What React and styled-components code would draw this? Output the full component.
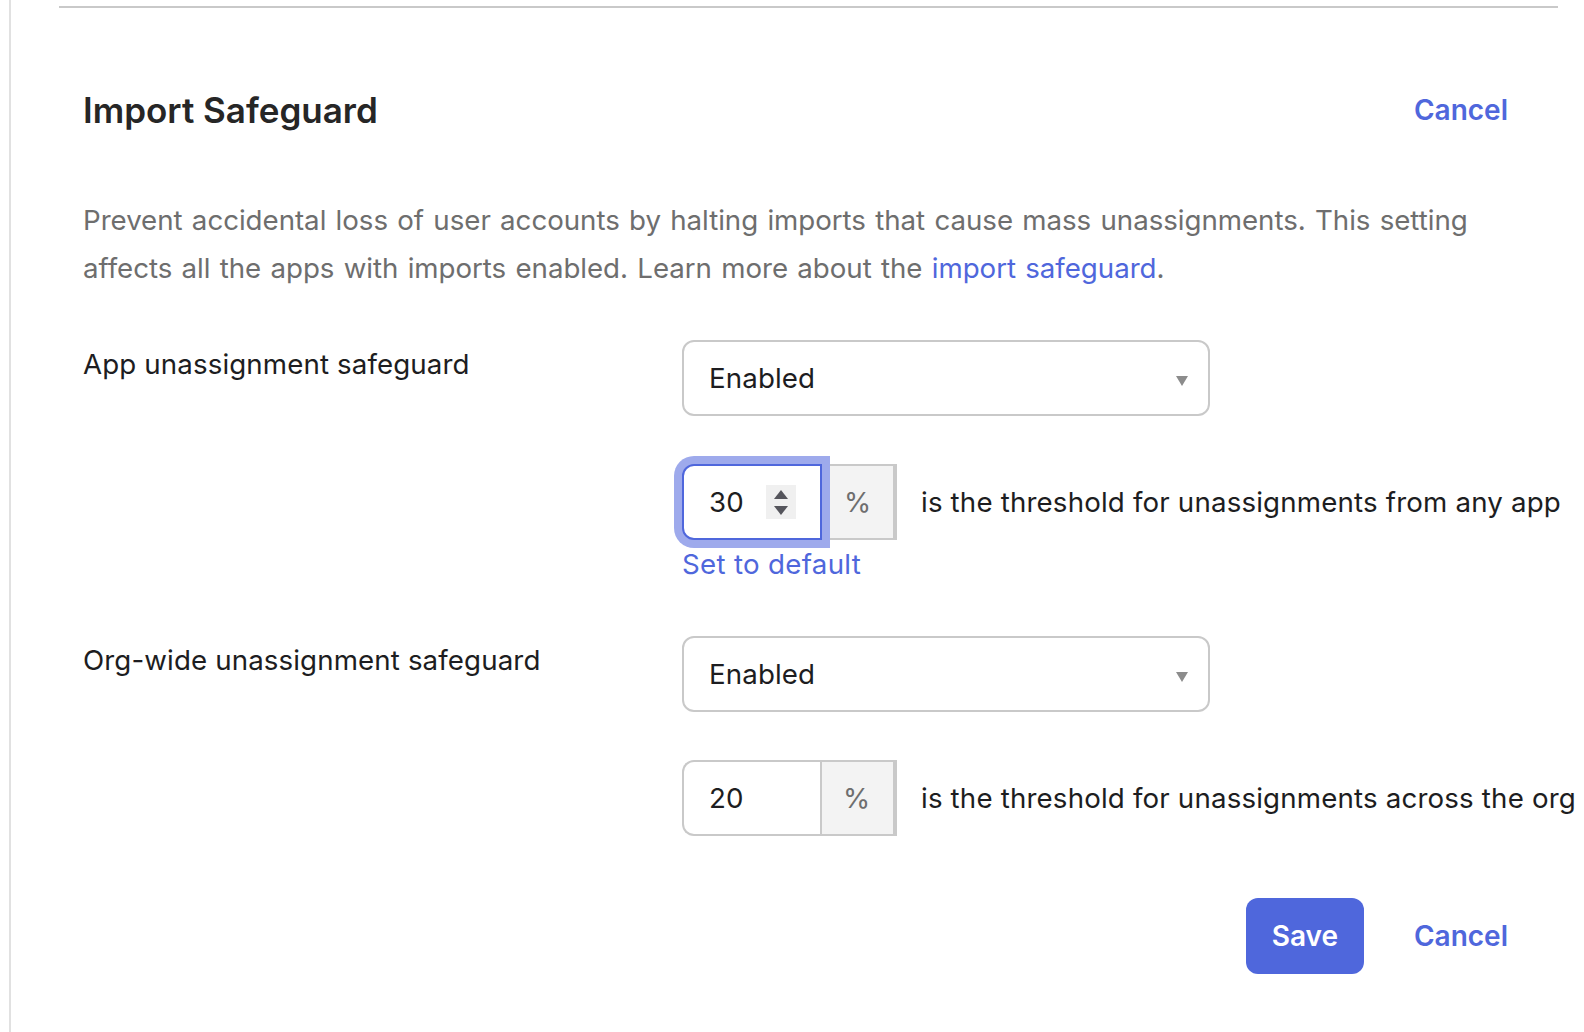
import React from "react";
import styled, { createGlobalStyle } from "styled-components";

const Global = createGlobalStyle`
  html, body { margin: 0; padding: 0; background: #fff; overflow: hidden; }
  body { font-family: Inter, "Liberation Sans", sans-serif; color: #1d1d21; }
`;
const Page = styled.div`
  width: 1584px; height: 1032px; box-sizing: border-box; overflow: hidden;
  margin-left: 9px; border-left: 2px solid #e1e1e1; padding: 6px 0 0 48px;
`;
const Rule = styled.hr`
  width: 1499px; height: 2px; margin: 0; border: 0; background: #c9c9c9;
`;
const Section = styled.section`
  padding: 0 0 0 24px; width: 1425px; position: relative;
`;
const Header = styled.header`
  display: flex; justify-content: space-between; align-items: center;
  height: 46px; margin-top: 79px;
`;
const Title = styled.h2`
  margin: 0; font-size: 35px; font-weight: 600; letter-spacing: 0; color: #262626;
`;
const TextLink = styled.a`
  color: #4f67dc; font-size: 28px; font-weight: 600; text-decoration: none;
`;
const Desc = styled.p`
  margin: 63px 0 0; width: 1420px; font-size: 27.7px; line-height: 48px; color: #6e6e6e;
  letter-spacing: -0.036px; word-spacing: 1.55px;
  a { color: #4f67dc; text-decoration: none; }
`;
const Row = styled.div`
  display: grid; grid-template-columns: 599px 1fr; margin-top: ${p => p.$top}px;
`;
const Label = styled.label`
  font-size: 27.7px; line-height: 48px; letter-spacing: 0.12px; color: #1d1d21; white-space: nowrap;
`;
const Field = styled.div`
  display: flex; flex-direction: column; align-items: flex-start;
`;
const SelectBox = styled.div`
  width: 528px; height: 76px; box-sizing: border-box; border: 2px solid #c9c9c9; border-radius: 12px;
  display: flex; align-items: center; justify-content: space-between; padding: 0 20px 0 25px;
  font-size: 27.7px; letter-spacing: 0.12px; color: #1d1d21; background: #fff;
`;
const Caret = styled.svg`
  width: 12px; height: 10px; display: block; margin-top: 6px;
`;
const Threshold = styled.div`
  display: flex; align-items: center; margin-top: 48px; white-space: nowrap;
`;
const NumberBox = styled.div`
  width: ${p => (p.$focused ? 140 : 138)}px; height: 76px; box-sizing: border-box; position: relative; z-index: 1;
  border-radius: 12px 0 0 12px; background: #fff; padding-left: 25px;
  display: flex; align-items: center; font-size: 27.7px; letter-spacing: 0.12px; color: #1d1d21;
  border: 2px solid ${p => (p.$focused ? "#4f67dc" : "#c9c9c9")};
  border-right-width: ${p => (p.$focused ? "2px" : "0")};
  box-shadow: ${p => (p.$focused ? "0 0 0 8px #9eaaec" : "none")};
`;
const Spinner = styled.span`
  position: absolute; left: 82px; top: 19px; width: 30px; height: 34px; background: #f0f0f0;
  display: flex; flex-direction: column; align-items: center; justify-content: center; gap: 7px;
`;
const SpinArrow = styled.svg`
  width: 14px; height: 9px; display: block;
`;
const Unit = styled.div`
  width: ${p => (p.$focused ? 75 : 77)}px; height: 76px; box-sizing: border-box; background: #f3f3f3;
  border: 2px solid #c9c9c9; border-left-width: 2px; border-right-width: 4px; padding-right: 2px;
  border-left-color: ${p => (p.$focused ? "#f3f3f3" : "#c9c9c9")};
  display: flex; align-items: center; justify-content: center;
  font-size: 27.7px; color: #6e6e6e;
`;
const Hint = styled.span`
  margin-left: 24px; font-size: 27.7px; letter-spacing: 0.17px; color: #1d1d21;
`;
const DefaultLink = styled.a`
  color: #4f67dc; font-size: 27.7px; line-height: 34px; letter-spacing: 0.3px; text-decoration: none;
  margin-top: 7px;
`;
const Footer = styled.footer`
  display: flex; justify-content: flex-end; align-items: center; gap: 50px; margin-top: 62px;
`;
const SaveButton = styled.button`
  width: 118px; height: 76px; border: 0; border-radius: 12px; background: #4f67dc; color: #fff;
  font: 600 28px Inter, "Liberation Sans", sans-serif; padding: 0;
`;

const ArrowDown = () => (
  <Caret viewBox="0 0 12 10"><path d="M0 0H12L6 10Z" fill="#8c8c8c" /></Caret>
);

function SafeguardRow({ label, top, value, focused, hint, children }) {
  return (
    <Row $top={top}>
      <Label>{label}</Label>
      <Field>
        <SelectBox>Enabled<ArrowDown /></SelectBox>
        <Threshold>
          <NumberBox $focused={focused}>
            {value}
            {focused && (
              <Spinner>
                <SpinArrow viewBox="0 0 14 9"><path d="M7 0L14 9H0Z" fill="#55555c" /></SpinArrow>
                <SpinArrow viewBox="0 0 14 9"><path d="M0 0H14L7 9Z" fill="#55555c" /></SpinArrow>
              </Spinner>
            )}
          </NumberBox>
          <Unit $focused={focused}>%</Unit>
          <Hint>{hint}</Hint>
        </Threshold>
        {children}
      </Field>
    </Row>
  );
}

export default function App() {
  return (
    <>
      <Global />
      <Page>
        <Rule />
        <Section>
          <Header>
            <Title>Import Safeguard</Title>
            <TextLink href="#">Cancel</TextLink>
          </Header>
          <Desc>
            Prevent accidental loss of user accounts by halting imports that cause mass unassignments. This setting
            affects all the apps with imports enabled. Learn more about the <a href="#">import safeguard</a>.
          </Desc>
          <SafeguardRow label="App unassignment safeguard" top={48} value="30" focused hint="is the threshold for unassignments from any app">
            <DefaultLink href="#">Set to default</DefaultLink>
          </SafeguardRow>
          <SafeguardRow label="Org-wide unassignment safeguard" top={55} value="20" hint="is the threshold for unassignments across the org" />
          <Footer>
            <SaveButton>Save</SaveButton>
            <TextLink href="#">Cancel</TextLink>
          </Footer>
        </Section>
      </Page>
    </>
  );
}
